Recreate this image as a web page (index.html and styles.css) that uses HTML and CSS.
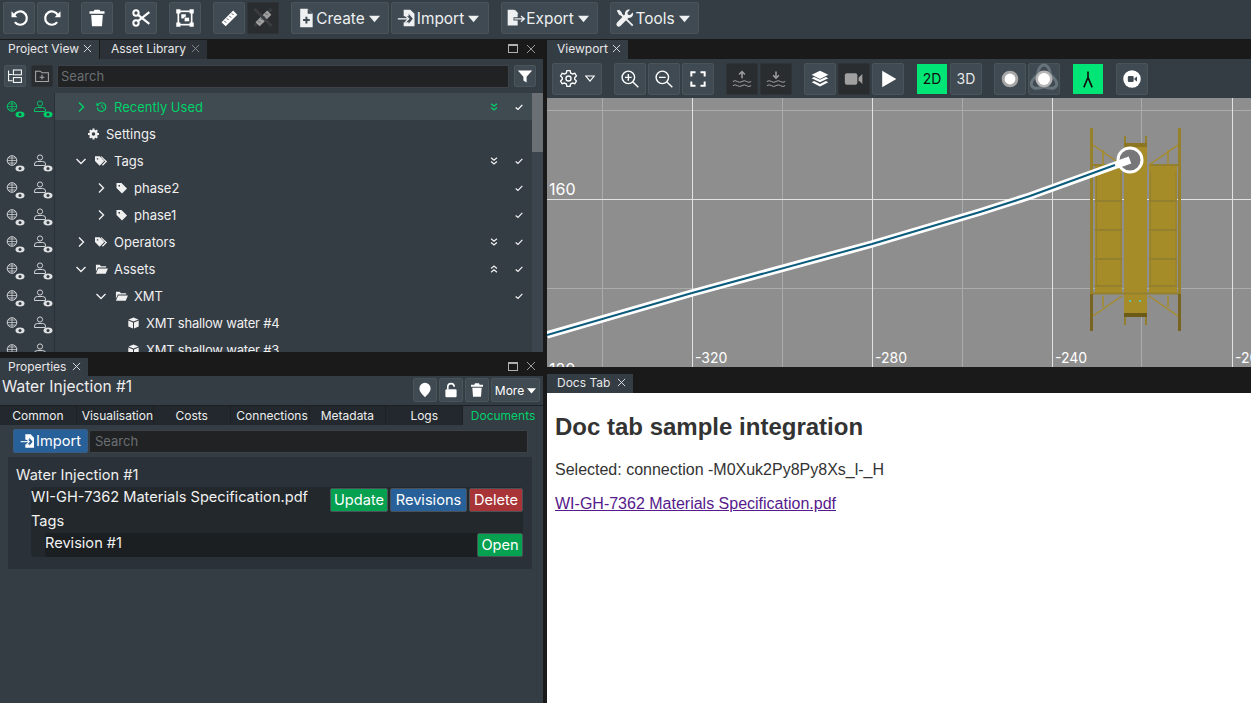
FILE: index.html
```html
<!DOCTYPE html>
<html lang="en">
<head>
    <meta charset="UTF-8">
    <title>Project Viewer</title>
    <link rel="stylesheet" href="styles.css">
</head>
<body>
    <svg class="defs" width="0" height="0">
        <symbol id="i-x" viewBox="0 0 10 10"><path d="M1 1l8 8M9 1l-8 8" fill="none" stroke="currentColor" stroke-width="1"/></symbol>
        <symbol id="i-undo" viewBox="0 0 24 24"><path d="M6 9a8 8 0 1 1 1 8" fill="none" stroke="currentColor" stroke-width="2.6"/><path d="M3 4v7h7z" fill="currentColor"/></symbol>
        <symbol id="i-redo" viewBox="0 0 24 24"><path d="M18 9a8 8 0 1 0-1 8" fill="none" stroke="currentColor" stroke-width="2.6"/><path d="M21 4v7h-7z" fill="currentColor"/></symbol>
        <symbol id="i-trash" viewBox="0 0 24 24"><path d="M9 2h6l1 2h5v3H3V4h5zM5 8.500h14L18 22H6z" fill="currentColor"/></symbol>
        <symbol id="i-scissors" viewBox="0 0 24 24"><circle cx="6" cy="6" r="3.200" fill="none" stroke="currentColor" stroke-width="2.400"/><circle cx="6" cy="18" r="3.200" fill="none" stroke="currentColor" stroke-width="2.400"/><path d="M8 8l14 11M8 16L22 5" stroke="currentColor" stroke-width="2.600"/></symbol>
        <symbol id="i-frame" viewBox="0 0 24 24"><rect x="4" y="4" width="16" height="16" fill="none" stroke="currentColor" stroke-width="2"/><path d="M1.500 1.500h5v5h-5zM17.500 1.500h5v5h-5zM1.500 17.500h5v5h-5zM17.500 17.500h5v5h-5z" fill="currentColor"/><rect x="7.500" y="7.500" width="5.500" height="5" fill="currentColor"/><rect x="11" y="11" width="6.500" height="5.500" rx="1.500" fill="currentColor" stroke="#3f4a52"/></symbol>
        <symbol id="i-ruler" viewBox="0 0 24 24"><path d="M17 3l5 5L8 22l-5-5z" fill="currentColor"/><path d="M15.500 6.500l2 2M12.500 9.500l2 2M9.500 12.500l2 2M6.500 15.500l2 2" stroke="#3f4a52" stroke-width="1.200"/></symbol>
        <symbol id="i-file-plus" viewBox="0 0 24 24"><path d="M5 1h9l6 6v16H5z" fill="currentColor"/><path d="M14 1v6h6" fill="#3f4a52"/><path d="M12.500 10.500v8M8.500 14.500h8" stroke="#3f4a52" stroke-width="2.400"/></symbol>
        <symbol id="i-import" viewBox="0 0 24 24"><path d="M8 2h8l5 5v15H8v-5h6v2l5-6-5-6v3H8z" fill="currentColor"/><path d="M1 13h12" stroke="currentColor" stroke-width="1.600"/><path d="M10 9l4 4-4 4" fill="none" stroke="currentColor" stroke-width="1.600"/></symbol>
        <symbol id="i-export" viewBox="0 0 24 24"><path d="M2 2h8l4 5v4H9v4h5v6H2z" fill="currentColor"/><path d="M11 7V2l4 5z" fill="currentColor"/><path d="M10 13h12M18 9.500l4 3.500-4 3.500" fill="none" stroke="currentColor" stroke-width="1.600"/></symbol>
        <symbol id="i-tools" viewBox="0 0 24 24"><path d="M2 3l3-1 3 3 .5 2L19 17.500l3 3-1.500 1.500-3-3L7 9l-2-.5z" fill="currentColor"/><path d="M21.500 5.500l-3.500 3-2.500-.5-.5-2.500 3-3.500c-3-.8-6.500 1.500-6 5.500L2.500 17.500a2.800 2.800 0 0 0 4 4L16 12c4 .5 6.500-3 5.500-6.500z" fill="currentColor"/></symbol>
        <symbol id="i-caret" viewBox="0 0 12 12"><path d="M0 3h12L6 10z" fill="currentColor"/></symbol>
        <symbol id="i-globe-eye" viewBox="0 0 20 20"><circle cx="7" cy="6.500" r="4.800" fill="none" stroke="currentColor" stroke-width=".9"/><path d="M2.200 6.500h9.600M3 4h8M3 9h8M7 1.700v9.600" stroke="currentColor" stroke-width=".7"/><ellipse cx="15" cy="14.500" rx="4.500" ry="3" fill="currentColor"/><circle cx="15" cy="14.500" r="1.500" fill="#343c44"/></symbol>
        <symbol id="i-user-eye" viewBox="0 0 20 20"><circle cx="7" cy="3.500" r="2.600" fill="none" stroke="currentColor" stroke-width=".9"/><path d="M1.500 11.500V10q0-2.500 3-2.500h5q3 0 3 2.500v1.500z" fill="none" stroke="currentColor" stroke-width=".9"/><ellipse cx="15" cy="14.500" rx="4.500" ry="3" fill="currentColor"/><circle cx="15" cy="14.500" r="1.500" fill="#343c44"/></symbol>
        <symbol id="i-right" viewBox="0 0 12 12"><path d="M4 1.500L8.500 6 4 10.500" fill="none" stroke="currentColor" stroke-width="1.400"/></symbol>
        <symbol id="i-down" viewBox="0 0 12 12"><path d="M1.500 4L6 8.500 10.500 4" fill="none" stroke="currentColor" stroke-width="1.400"/></symbol>
        <symbol id="i-history" viewBox="0 0 12 12"><path d="M2.500 3.500a4.300 4.300 0 1 1-.8 3" fill="none" stroke="currentColor" stroke-width="1.200"/><path d="M.8 1.500v3.300h3.300z" fill="currentColor"/><path d="M6.500 3.500v3l2 1" fill="none" stroke="currentColor"/></symbol>
        <symbol id="i-cog" viewBox="0 0 24 24"><circle cx="12" cy="12" r="6" fill="none" stroke="currentColor" stroke-width="5"/><path d="M12 1v5M12 18v5M1 12h5M18 12h5M4.500 4.500l3 3M16.500 16.500l3 3M4.500 19.500l3-3M16.500 7.500l3-3" stroke="currentColor" stroke-width="4"/></symbol>
        <symbol id="i-cog-line" viewBox="0 0 24 24"><path d="M10 2h4l.7 3 2.300 1.300 3-.9 2 3.400-2.200 2.200v2l2.200 2.200-2 3.400-3-.9L14.700 19 14 22h-4l-.7-3L7 17.700l-3 .9-2-3.400L4.200 13v-2L2 8.800l2-3.400 3 .9L9.300 5z" fill="none" stroke="currentColor" stroke-width="1.700"/><circle cx="12" cy="12" r="3.200" fill="none" stroke="currentColor" stroke-width="1.700"/></symbol>
        <symbol id="i-tag" viewBox="0 0 12 12"><path d="M1 1h5l5.500 5.500-5 5L1 6zM3 3v1.500h1.500V3z" fill="currentColor" fill-rule="evenodd"/></symbol>
        <symbol id="i-tags" viewBox="0 0 14 12"><path d="M0 1h5l5 5-5 5-5-5zM2 3v1.500h1.500V3z" fill="currentColor" fill-rule="evenodd"/><path d="M7 1l6 5.500L8.500 11l-1-1L11 6.500 6 1.500z" fill="currentColor"/></symbol>
        <symbol id="i-folder" viewBox="0 0 14 12"><path d="M1 1.500h4l1.500 1.500H12v1.500H3L1 9z" fill="currentColor"/><path d="M3.500 5.500H14l-2.500 5.500H1z" fill="currentColor"/></symbol>
        <symbol id="i-cube" viewBox="0 0 12 12"><path d="M6 .5l5 2-5 2-5-2zM.8 3.500L5.500 5.500V11.500L.8 9.500zM11.200 3.500V9.500L6.500 11.500V5.500z" fill="currentColor"/></symbol>
        <symbol id="i-check" viewBox="0 0 12 12"><path d="M2 6.500L4.800 9 10 3.500" fill="none" stroke="currentColor" stroke-width="1.500"/></symbol>
        <symbol id="i-dbl-down" viewBox="0 0 12 12"><path d="M2.500 2l3.500 3 3.500-3M2.500 6.500l3.500 3 3.500-3" fill="none" stroke="currentColor" stroke-width="1.500"/></symbol>
        <symbol id="i-dbl-up" viewBox="0 0 12 12"><path d="M2.500 5.500l3.500-3 3.500 3M2.500 10l3.500-3 3.500 3" fill="none" stroke="currentColor" stroke-width="1.500"/></symbol>
        <symbol id="i-tree" viewBox="0 0 20 20"><path d="M2 3v13h5M2 8h5" fill="none" stroke="currentColor" stroke-width="1.300"/><rect x="8" y="2.500" width="10" height="6" fill="none" stroke="currentColor" stroke-width="1.300"/><rect x="8" y="12" width="10" height="6" fill="none" stroke="currentColor" stroke-width="1.300"/></symbol>
        <symbol id="i-folder-plus" viewBox="0 0 20 20"><path d="M2 4h6l2 2h8v11H2z" fill="none" stroke="currentColor" stroke-width="1.300"/><path d="M10 8.500v6M7 11.500h6" stroke="currentColor" stroke-width="1.300"/></symbol>
        <symbol id="i-filter" viewBox="0 0 20 20"><path d="M1 3h18l-7 8v7l-4-2.500V11z" fill="currentColor"/></symbol>
        <symbol id="i-zoom-in" viewBox="0 0 24 24"><circle cx="10" cy="10" r="7.500" fill="none" stroke="currentColor" stroke-width="1.700"/><path d="M15.500 15.500L22 22M10 6v8M6 10h8" stroke="currentColor" stroke-width="1.700"/></symbol>
        <symbol id="i-zoom-out" viewBox="0 0 24 24"><circle cx="10" cy="10" r="7.500" fill="none" stroke="currentColor" stroke-width="1.700"/><path d="M15.500 15.500L22 22M6 10h8" stroke="currentColor" stroke-width="1.700"/></symbol>
        <symbol id="i-fit" viewBox="0 0 24 24"><path d="M4 9V4h5M15 4h5v5M20 15v5h-5M9 20H4v-5" fill="none" stroke="currentColor" stroke-width="2.400"/></symbol>
        <symbol id="i-water-up" viewBox="0 0 24 24"><path d="M12 3v8M8.500 6.500L12 3l3.500 3.500" fill="none" stroke="currentColor" stroke-width="1.800"/><path d="M1 15q2.750-2 5.500 0t5.500 0 5.500 0 5.500 0M1 20q2.750-2 5.500 0t5.500 0 5.500 0 5.500 0" fill="none" stroke="currentColor" stroke-width="1.200"/></symbol>
        <symbol id="i-water-down" viewBox="0 0 24 24"><path d="M12 3v8M8.500 7.500L12 11l3.500-3.500" fill="none" stroke="currentColor" stroke-width="1.800"/><path d="M1 15q2.750-2 5.500 0t5.500 0 5.500 0 5.500 0M1 20q2.750-2 5.500 0t5.500 0 5.500 0 5.500 0" fill="none" stroke="currentColor" stroke-width="1.200"/></symbol>
        <symbol id="i-layers" viewBox="0 0 24 24"><path d="M12 2l10 5-10 5L2 7z" fill="currentColor"/><path d="M2 11l3-1.500 7 3.500 7-3.500 3 1.500-10 5z" fill="currentColor"/><path d="M2 16l3-1.500 7 3.500 7-3.500 3 1.500-10 5z" fill="currentColor"/></symbol>
        <symbol id="i-video" viewBox="0 0 24 24"><rect x="1" y="5" width="15" height="14" rx="2.500" fill="currentColor"/><path d="M17.500 10.500L22 6v12l-4.500-4.500z" fill="currentColor"/></symbol>
        <symbol id="i-play" viewBox="0 0 24 24"><path d="M5 2l17 10-17 10z" fill="currentColor"/></symbol>
        <symbol id="i-dot" viewBox="0 0 24 24"><circle cx="12" cy="12" r="10" fill="#a6a6a6"/><circle cx="12" cy="12" r="6.500" fill="#fff"/></symbol>
        <symbol id="i-dot-orbit" viewBox="0 0 32 32"><g fill="none" stroke="#68747b" stroke-width="3"><ellipse cx="16" cy="13" rx="6.500" ry="11"/><ellipse cx="16" cy="13" rx="6.500" ry="11" transform="rotate(120 16 16)"/><ellipse cx="16" cy="13" rx="6.500" ry="11" transform="rotate(240 16 16)"/></g><circle cx="16" cy="16" r="8.500" fill="#b5b5b5"/><circle cx="16" cy="16" r="6" fill="#fff"/></symbol>
        <symbol id="i-branch" viewBox="0 0 24 24"><path d="M12 3v7L7 22M12 10l5 12" fill="none" stroke="currentColor" stroke-width="2"/></symbol>
        <symbol id="i-rec" viewBox="0 0 24 24"><circle cx="12" cy="12" r="10.500" fill="currentColor"/><rect x="7" y="8.500" width="7" height="7" rx="1.500" fill="#3f4a52"/><path d="M15 11l3-2v6l-3-2z" fill="#3f4a52"/></symbol>
        <symbol id="i-pin" viewBox="0 0 20 20"><path d="M10 1a7 7 0 0 1 7 7c0 4-4 8-7 11-3-3-7-7-7-11a7 7 0 0 1 7-7z" fill="currentColor"/></symbol>
        <symbol id="i-unlock" viewBox="0 0 20 20"><path d="M6 9V6a4 4 0 0 1 8 0" fill="none" stroke="currentColor" stroke-width="2"/><rect x="3" y="9" width="14" height="10" rx="1.500" fill="currentColor"/></symbol>
    </svg>

    <header class="topbar">
        <button class="tool"><svg class="ico-lg"><use href="#i-undo"/></svg></button>
        <button class="tool"><svg class="ico-lg"><use href="#i-redo"/></svg></button>
        <button class="tool gap-l"><svg class="ico-lg"><use href="#i-trash"/></svg></button>
        <button class="tool gap-l"><svg class="ico-lg"><use href="#i-scissors"/></svg></button>
        <button class="tool gap-l"><svg class="ico-lg"><use href="#i-frame"/></svg></button>
        <button class="tool gap-l"><svg class="ico-lg"><use href="#i-ruler"/></svg></button>
        <button class="tool off"><i class="strike under"></i><svg class="ico-lg"><use href="#i-ruler"/></svg><i class="strike"></i></button>
        <button class="menu menu-create gap-l"><svg class="ico-lg"><use href="#i-file-plus"/></svg>Create<svg class="caret"><use href="#i-caret"/></svg></button>
        <button class="menu menu-create"><svg class="ico-lg"><use href="#i-import"/></svg>Import<svg class="caret"><use href="#i-caret"/></svg></button>
        <button class="menu menu-export gap-l"><svg class="ico-lg"><use href="#i-export"/></svg>Export<svg class="caret"><use href="#i-caret"/></svg></button>
        <button class="menu menu-tools gap-l"><svg class="ico-lg"><use href="#i-tools"/></svg>Tools<svg class="caret"><use href="#i-caret"/></svg></button>
    </header>

    <div class="workspace">
        <div class="left-col">
            <section class="project-panel">
                <div class="tabstrip">
                    <div class="tab active tab-project">Project View<svg class="tab-x"><use href="#i-x"/></svg></div>
                    <div class="tab tab-assets">Asset Library<svg class="tab-x dim"><use href="#i-x"/></svg></div>
                    <div class="win-ctrl"><span class="win-max"></span><svg class="win-close"><use href="#i-x"/></svg></div>
                </div>
                <div class="search-bar">
                    <button class="mini"><svg class="ico-md"><use href="#i-tree"/></svg></button>
                    <button class="mini off"><svg class="ico-md"><use href="#i-folder-plus"/></svg></button>
                    <input class="search" placeholder="Search">
                    <button class="mini"><svg class="ico-md"><use href="#i-filter"/></svg></button>
                </div>
                <div class="tree-wrap">
                    <div class="tree">
                        <div class="row selected">
                            <div class="gutter"><svg class="ico-eye"><use href="#i-globe-eye"/></svg><svg class="ico-eye"><use href="#i-user-eye"/></svg></div>
                            <div class="node lvl0"><svg class="chev"><use href="#i-right"/></svg><svg class="ico-sm"><use href="#i-history"/></svg><span>Recently Used</span></div>
                            <svg class="flag"><use href="#i-dbl-down"/></svg><svg class="tick"><use href="#i-check"/></svg>
                        </div>
                        <div class="row">
                            <div class="gutter"></div>
                            <div class="node lvl-set"><svg class="ico-sm"><use href="#i-cog"/></svg><span>Settings</span></div>
                        </div>
                        <div class="row">
                            <div class="gutter"><svg class="ico-eye"><use href="#i-globe-eye"/></svg><svg class="ico-eye"><use href="#i-user-eye"/></svg></div>
                            <div class="node lvl0"><svg class="chev"><use href="#i-down"/></svg><svg class="ico-sm"><use href="#i-tags"/></svg><span>Tags</span></div>
                            <svg class="flag"><use href="#i-dbl-down"/></svg><svg class="tick"><use href="#i-check"/></svg>
                        </div>
                        <div class="row">
                            <div class="gutter"><svg class="ico-eye"><use href="#i-globe-eye"/></svg><svg class="ico-eye"><use href="#i-user-eye"/></svg></div>
                            <div class="node lvl1"><svg class="chev"><use href="#i-right"/></svg><svg class="ico-sm"><use href="#i-tag"/></svg><span>phase2</span></div>
                            <svg class="tick"><use href="#i-check"/></svg>
                        </div>
                        <div class="row">
                            <div class="gutter"><svg class="ico-eye"><use href="#i-globe-eye"/></svg><svg class="ico-eye"><use href="#i-user-eye"/></svg></div>
                            <div class="node lvl1"><svg class="chev"><use href="#i-right"/></svg><svg class="ico-sm"><use href="#i-tag"/></svg><span>phase1</span></div>
                            <svg class="tick"><use href="#i-check"/></svg>
                        </div>
                        <div class="row">
                            <div class="gutter"><svg class="ico-eye"><use href="#i-globe-eye"/></svg><svg class="ico-eye"><use href="#i-user-eye"/></svg></div>
                            <div class="node lvl0"><svg class="chev"><use href="#i-right"/></svg><svg class="ico-sm"><use href="#i-tags"/></svg><span>Operators</span></div>
                            <svg class="flag"><use href="#i-dbl-down"/></svg><svg class="tick"><use href="#i-check"/></svg>
                        </div>
                        <div class="row">
                            <div class="gutter"><svg class="ico-eye"><use href="#i-globe-eye"/></svg><svg class="ico-eye"><use href="#i-user-eye"/></svg></div>
                            <div class="node lvl0"><svg class="chev"><use href="#i-down"/></svg><svg class="ico-sm"><use href="#i-folder"/></svg><span>Assets</span></div>
                            <svg class="flag"><use href="#i-dbl-up"/></svg><svg class="tick"><use href="#i-check"/></svg>
                        </div>
                        <div class="row">
                            <div class="gutter"><svg class="ico-eye"><use href="#i-globe-eye"/></svg><svg class="ico-eye"><use href="#i-user-eye"/></svg></div>
                            <div class="node lvl1"><svg class="chev"><use href="#i-down"/></svg><svg class="ico-sm"><use href="#i-folder"/></svg><span>XMT</span></div>
                            <svg class="tick"><use href="#i-check"/></svg>
                        </div>
                        <div class="row">
                            <div class="gutter"><svg class="ico-eye"><use href="#i-globe-eye"/></svg><svg class="ico-eye"><use href="#i-user-eye"/></svg></div>
                            <div class="node lvl2"><svg class="ico-sm"><use href="#i-cube"/></svg><span>XMT shallow water #4</span></div>
                        </div>
                        <div class="row">
                            <div class="gutter"><svg class="ico-eye"><use href="#i-globe-eye"/></svg><svg class="ico-eye"><use href="#i-user-eye"/></svg></div>
                            <div class="node lvl2"><svg class="ico-sm"><use href="#i-cube"/></svg><span>XMT shallow water #3</span></div>
                        </div>
                    </div>
                    <div class="scrollbar"><div class="scroll-thumb"></div></div>
                </div>
            </section>

            <section class="props-panel">
                <div class="tabstrip">
                    <div class="tab active tab-props">Properties<svg class="tab-x"><use href="#i-x"/></svg></div>
                    <div class="win-ctrl"><span class="win-max"></span><svg class="win-close"><use href="#i-x"/></svg></div>
                </div>
                <div class="props-head">
                    <div class="props-title">Water Injection #1</div>
                    <button class="small"><svg class="ico-md"><use href="#i-pin"/></svg></button>
                    <button class="small"><svg class="ico-md"><use href="#i-unlock"/></svg></button>
                    <button class="small"><svg class="ico-md"><use href="#i-trash"/></svg></button>
                    <button class="small more">More<svg class="caret-sm"><use href="#i-caret"/></svg></button>
                </div>
                <div class="props-tabs">
                    <div class="ptab">Common</div>
                    <div class="ptab nudge">Visualisation</div>
                    <div class="ptab">Costs</div>
                    <div class="ptab wide nudge">Connections</div>
                    <div class="ptab">Metadata</div>
                    <div class="ptab">Logs</div>
                    <div class="ptab on">Documents</div>
                </div>
                <div class="docs-search">
                    <button class="btn-import"><svg class="ico-md"><use href="#i-import"/></svg>Import</button>
                    <input class="search" placeholder="Search">
                </div>
                <div class="docs-box">
                    <div class="docs-name">Water Injection #1</div>
                    <div class="doc-card">
                        <div class="doc-row">
                            <span class="doc-file">WI-GH-7362 Materials Specification.pdf</span>
                            <button class="act green">Update</button>
                            <button class="act blue">Revisions</button>
                            <button class="act red">Delete</button>
                        </div>
                        <div class="doc-tags">Tags</div>
                        <div class="rev-row">
                            <span class="rev-name">Revision #1</span>
                            <button class="act green">Open</button>
                        </div>
                    </div>
                </div>
            </section>
        </div>

        <div class="right-col">
            <section class="viewport-panel">
                <div class="tabstrip">
                    <div class="tab active tab-view">Viewport<svg class="tab-x"><use href="#i-x"/></svg></div>
                </div>
                <div class="view-tools">
                    <button class="tool tool-settings"><svg class="ico-cog"><use href="#i-cog-line"/></svg><svg class="caret-open" viewBox="0 0 12 8"><path d="M1 1h10L6 7z" fill="none" stroke="currentColor" stroke-width="1.400"/></svg></button>
                    <button class="tool gap-l"><svg class="ico-lg"><use href="#i-zoom-in"/></svg></button>
                    <button class="tool"><svg class="ico-lg"><use href="#i-zoom-out"/></svg></button>
                    <button class="tool"><svg class="ico-lg"><use href="#i-fit"/></svg></button>
                    <button class="tool off gap-l"><svg class="ico-lg"><use href="#i-water-up"/></svg></button>
                    <button class="tool off"><svg class="ico-lg"><use href="#i-water-down"/></svg></button>
                    <button class="tool gap-l"><svg class="ico-lg"><use href="#i-layers"/></svg></button>
                    <button class="tool off"><svg class="ico-lg"><use href="#i-video"/></svg></button>
                    <button class="tool"><svg class="ico-lg"><use href="#i-play"/></svg></button>
                    <button class="mode on gap-mode">2D</button>
                    <button class="tool txt">3D</button>
                    <button class="tool gap-l"><svg class="ico-lg"><use href="#i-dot"/></svg></button>
                    <button class="tool"><svg class="ico-orbit"><use href="#i-dot-orbit"/></svg></button>
                    <button class="mode on gap-mode"><svg class="ico-lg"><use href="#i-branch"/></svg></button>
                    <button class="tool gap-mode"><svg class="ico-lg"><use href="#i-rec"/></svg></button>
                </div>
                <svg class="canvas" viewBox="547 98 704 269">
                    <rect x="547" y="98" width="704" height="269" fill="#8e8e8e"/>
                    <g class="grid-minor">
                        <path d="M602.500 98v269M782.500 98v269M962.500 98v269M1141.500 98v269M547 110.500h704M547 288.500h704"/>
                    </g>
                    <g class="grid-major">
                        <path d="M692.500 98v269M872.500 98v269M1052.500 98v269M1232.500 98v269M547 199.500h704"/>
                    </g>
                    <g class="labels">
                        <text class="label-y" x="549" y="195">160</text>
                        <text class="label-y" x="549" y="375">120</text>
                        <text x="695" y="363">-320</text>
                        <text x="875" y="363">-280</text>
                        <text x="1055" y="363">-240</text>
                        <text x="1235" y="363">-200</text>
                    </g>
                    <g class="rig">
                        <rect x="1095" y="166" width="27" height="128" fill="#a68c28"/>
                        <rect x="1149" y="166" width="28" height="128" fill="#a68c28"/>
                        <rect x="1124" y="143" width="23" height="173" fill="#a68c28"/>
                        <path class="rig-bar" d="M1125 136v8M1146 136v8M1125 316v9M1146 316v9M1095 201h27M1095 230h27M1095 259h27M1095 286h27M1149 201h28M1149 230h28M1149 259h28M1149 286h28M1090 165h32M1149 165h32M1090 293.500h91"/>
                        <path class="rig-edge" d="M1096.500 172v114M1121 172v114M1150.500 172v114M1176 172v114"/>
                        <rect x="1090" y="128" width="3" height="203" fill="#96802a"/>
                        <rect x="1178" y="128" width="3" height="203" fill="#96802a"/>
                        <rect x="1090" y="294" width="3" height="37" fill="#786620"/>
                        <rect x="1178" y="294" width="3" height="37" fill="#786620"/>
                        <rect x="1124" y="313" width="23" height="4" fill="#6b5a18"/>
                        <rect x="1124" y="143" width="23" height="4" fill="#8c7522"/>
                        <path class="rig-line" d="M1093 145l29 20M1178 145l-29 20M1103 150v15M1168 150v15M1122 296l-29 20M1149 296l29 20M1103 296v11M1168 296v11"/>
                        <circle cx="1130" cy="301" r="1" fill="#40d0d8"/>
                        <circle cx="1140" cy="301" r="1" fill="#40d0d8"/>
                    </g>
                    <circle cx="1130" cy="160" r="12" fill="#77777a" stroke="#fff" stroke-width="3"/>
                    <polyline class="pipe-outer" points="547,335 692,293 872,244 980,212 1030,196 1130,160"/>
                    <polyline class="pipe-inner" points="547,335 692,293 872,244 980,212 1030,196 1115,165"/>
                </svg>
            </section>
            <section class="docs-panel">
                <div class="tabstrip">
                    <div class="tab active tab-docs">Docs Tab<svg class="tab-x"><use href="#i-x"/></svg></div>
                </div>
                <div class="doc-page">
                    <h1>Doc tab sample integration</h1>
                    <p>Selected: connection -M0Xuk2Py8Py8Xs_l-_H</p>
                    <p><a href="#">WI-GH-7362 Materials Specification.pdf</a></p>
                </div>
            </section>
        </div>
    </div>
</body>
</html>
```

FILE: styles.css
```css
/* Base */
* {
    box-sizing: border-box;
}

html, body {
    height: 100%;
}

body {
    margin: 0;
    overflow: hidden;
    background-color: #1a1a1a;
    color: #f2f2f2;
    font-family: Inter, "Noto Sans", sans-serif;
    font-size: 12px;
    display: flex;
    flex-direction: column;
}

button {
    font-family: inherit;
    color: inherit;
    padding: 0;
    cursor: pointer;
}

svg {
    display: block;
    flex: none;
}

.defs {
    position: absolute;
}

/* Icon sizes */
.ico-lg { width: 20px; height: 20px; }
.ico-md { width: 16px; height: 16px; }
.ico-sm { width: 13px; height: 12px; }
.ico-cog { width: 19px; height: 19px; }
.ico-orbit { width: 32px; height: 32px; }
.ico-eye { width: 20px; height: 20px; color: #dfe1e2; }
.caret { width: 11px; height: 11px; margin-left: 4px; }
.caret-sm { width: 9px; height: 9px; margin-left: 3px; }
.caret-open { width: 10px; height: 7px; margin-left: 7px; }

/* Top toolbar */
.topbar {
    height: 39px;
    flex: none;
    background-color: #343c44;
    display: flex;
    align-items: flex-start;
    gap: 2px;
    padding: 2px 0 0 3px;
}

.tool {
    position: relative;
    width: 32px;
    height: 32px;
    background-color: #3f4a52;
    border: 1px solid #4a545b;
    border-radius: 2px;
    color: #fff;
    display: flex;
    align-items: center;
    justify-content: center;
    flex: none;
}

.tool.off {
    background-color: #2a2d30;
    border-color: #2f3337;
    color: #a0a0a0;
}

.tool.off svg {
    position: relative;
    z-index: 1;
}

.tool.txt {
    font-size: 14px;
    color: #e6e6e6;
    margin-left: 1px;
}

/* The two bars of the cross over the disabled ruler */
.strike {
    position: absolute;
    z-index: 2;
    left: 3px;
    top: 13px;
    width: 24px;
    height: 3px;
    background-color: #3a3d40;
    transform: rotate(45deg);
}

.strike.under {
    z-index: 0;
    transform: rotate(-45deg);
}

.gap-l {
    margin-left: 10px;
}

.gap-mode {
    margin-left: 11px;
}

.menu {
    height: 32px;
    background-color: #3f4a52;
    border: 1px solid #4a545b;
    border-radius: 2px;
    font-size: 15.400px;
    display: flex;
    align-items: center;
    justify-content: center;
    flex: none;
    padding-right: 4px;
    color: #eef0f1;
}

.menu-create { width: 98px; }
.menu-export { width: 97px; }
.menu-tools { width: 89px; }

/* Workspace split */
.workspace {
    flex: 1;
    display: flex;
    min-height: 0;
    gap: 4px;
}

.left-col {
    width: 543px;
    display: flex;
    flex-direction: column;
    gap: 5px;
}

.right-col {
    flex: 1;
    display: flex;
    flex-direction: column;
    min-width: 0;
}

/* Tabs */
.tabstrip {
    height: 20px;
    flex: none;
    background-color: #1a1a1a;
    display: flex;
    padding-top: 1px;
    gap: 1px;
}

.tab {
    height: 19px;
    display: flex;
    align-items: center;
    justify-content: space-between;
    padding: 0 7px 2px 8px;
    background-color: #2b3137;
    color: #e8e8e8;
}

.tab.active {
    background-color: #343c44;
}

.tab-project { width: 99px; }
.tab-assets { width: 107px; padding-left: 11px; }
.tab-props { width: 88px; }
.tab-view { width: 81px; padding-left: 10px; }
.tab-docs { width: 86px; padding-left: 10px; }

.tab-x {
    width: 9px;
    height: 9px;
    color: #e8e8e8;
}

.tab-x.dim {
    color: #8a8f93;
}

.win-ctrl {
    margin-left: auto;
    display: flex;
    align-items: center;
    gap: 8px;
    padding: 0 7px 2px 0;
    color: #9c9c9c;
}

.win-max {
    width: 10px;
    height: 9px;
    border: 1px solid #b0b0b0;
    border-top-width: 2px;
}

.win-close {
    width: 10px;
    height: 10px;
}

/* Project panel */
.project-panel {
    height: 313px;
    flex: none;
    display: flex;
    flex-direction: column;
    background-color: #343c44;
}

.search-bar {
    height: 34px;
    flex: none;
    display: flex;
    align-items: center;
    gap: 5px;
    padding: 0 7px 0 4px;
}

.mini {
    width: 22px;
    height: 22px;
    flex: none;
    background-color: #3f4a52;
    border: 1px solid #4a545b;
    border-radius: 2px;
    display: flex;
    align-items: center;
    justify-content: center;
    color: #fff;
}

.mini.off {
    background-color: #2a2d30;
    border-color: #2f3337;
    color: #a8a8a8;
}

.search {
    flex: 1;
    min-width: 0;
    height: 23px;
    background-color: #202224;
    border: 1px solid #3c4247;
    border-radius: 2px;
    padding: 0 3px;
    font-family: inherit;
    font-size: 13px;
    color: #ddd;
    outline: none;
}

.search-bar .search {
    margin-left: -1px;
}

.docs-search .search {
    padding: 0 5px;
}

.search::placeholder {
    color: #6b6f72;
}

.tree-wrap {
    flex: 1;
    display: flex;
    min-height: 0;
}

.tree {
    flex: 1;
    overflow: hidden;
    min-width: 0;
}

.scrollbar {
    width: 11px;
    flex: none;
    background-color: #3c454d;
}

.scroll-thumb {
    height: 59px;
    background-color: #6b7075;
}

.row {
    height: 27px;
    display: flex;
    align-items: center;
    font-size: 13px;
    color: #f0f0f0;
}

.row.selected {
    color: #00d26a;
    background: linear-gradient(to right, #343c44 55px, #3f4a51 55px);
}

.row.selected .ico-eye {
    color: #00d26a;
}

.row.selected .tick {
    color: #fff;
}

.gutter {
    width: 55px;
    height: 100%;
    flex: none;
    display: flex;
    align-items: flex-start;
    gap: 8px;
    padding: 7px 0 0 5px;
    border-right: 1px solid #2a3037;
}

.node {
    flex: 1;
    height: 100%;
    display: flex;
    align-items: center;
    gap: 6px;
    min-width: 0;
    white-space: nowrap;
}

.lvl0 { padding-left: 20px; }
.lvl1 { padding-left: 40px; }
.lvl2 { padding-left: 72px; letter-spacing: -0.2px; }
.lvl-set { padding-left: 32px; }

.chev {
    width: 12px;
    height: 12px;
    margin-right: 2px;
}

.flag {
    width: 10px;
    height: 10px;
    margin-right: 15px;
}

.tick {
    width: 10px;
    height: 10px;
    margin-right: 8px;
}

/* Properties panel */
.props-panel {
    flex: 1;
    min-height: 0;
    background-color: #343c44;
    display: flex;
    flex-direction: column;
}

.props-panel .tabstrip {
    height: 19px;
}

.props-panel .tab {
    height: 18px;
}

.props-head {
    height: 29px;
    flex: none;
    display: flex;
    align-items: flex-start;
    gap: 2px;
    padding: 2px 3px 0 2px;
}

.props-title {
    flex: 1;
    font-size: 15.500px;
    line-height: 18px;
    color: #eee;
}

.small {
    width: 24px;
    height: 24px;
    background-color: #3f4a52;
    border: 1px solid #4a545b;
    border-radius: 2px;
    display: flex;
    align-items: center;
    justify-content: center;
    color: #fff;
}

.more {
    width: 49px;
    font-size: 12px;
}

.props-tabs {
    height: 20px;
    flex: none;
    display: flex;
    gap: 1px;
    background-color: #1d2024;
    padding-top: 1px;
}

.ptab {
    width: 76px;
    background-color: #22282d;
    display: flex;
    align-items: center;
    justify-content: center;
    white-space: nowrap;
    color: #eee;
}

.ptab.nudge {
    padding-left: 5px;
}

.ptab.wide {
    width: 78px;
}

.ptab.on {
    width: 80px;
    background-color: #343c44;
    color: #00d26a;
}

.docs-search {
    height: 32px;
    flex: none;
    display: flex;
    align-items: center;
    gap: 1px;
    padding: 0 15px 0 13px;
}

.btn-import {
    width: 75px;
    height: 24px;
    flex: none;
    background-color: #28609a;
    border: 1px solid #3a5c80;
    border-radius: 2px;
    font-size: 14.600px;
    display: flex;
    align-items: center;
    justify-content: center;
    color: #fff;
}

.docs-box {
    margin: 0 11px 0 8px;
    background-color: #2a3138;
    height: 112px;
    padding: 8px 8px 0;
}

.docs-name {
    font-size: 14.600px;
    line-height: 20px;
    color: #eee;
}

.doc-card {
    margin: 2px 1px 0 15px;
    background-color: #23282c;
    border-radius: 4px;
    height: 70px;
    display: flex;
    flex-direction: column;
}

.doc-row {
    height: 24px;
    flex: none;
    display: flex;
    align-items: flex-start;
    gap: 2px;
    font-size: 14.600px;
}

.doc-file {
    flex: 1;
    line-height: 20px;
    white-space: nowrap;
}

.act {
    height: 24px;
    padding: 0 0 1px;
    margin-top: 1px;
    border: 1px solid #4a5258;
    border-radius: 2px;
    font-size: 14.600px;
    color: #fff;
    flex: none;
}

.act.green { background-color: #05a050; }
.act.blue { background-color: #28609a; }
.act.red { background-color: #a83438; }
.doc-row .green { width: 58px; }
.doc-row .blue { width: 77px; }
.doc-row .red { width: 54px; }
.rev-row .green { width: 46px; margin-top: 0; }

.doc-tags {
    height: 22px;
    font-size: 14.600px;
    line-height: 20px;
}

.rev-row {
    height: 24px;
    margin-left: 14px;
    background-color: #1c1f22;
    border-radius: 3px;
    display: flex;
    align-items: flex-start;
    font-size: 14.600px;
}

.rev-name {
    flex: 1;
    line-height: 20px;
}

/* Viewport */
.viewport-panel {
    height: 328px;
    flex: none;
    display: flex;
    flex-direction: column;
    background-color: #343c44;
}

.view-tools {
    height: 39px;
    flex: none;
    display: flex;
    align-items: center;
    gap: 2px;
    padding-left: 5px;
}

.tool-settings {
    width: 50px;
}

.mode {
    width: 30px;
    height: 30px;
    background-color: #00e676;
    border: none;
    color: #111;
    font-size: 14px;
    display: flex;
    align-items: center;
    justify-content: center;
    flex: none;
}

.canvas {
    width: 704px;
    height: 269px;
    flex: none;
}

.grid-minor path {
    stroke: #ababab;
    stroke-width: 1;
    fill: none;
}

.grid-major path {
    stroke: #e2e2e2;
    stroke-width: 1;
    fill: none;
}

.labels text {
    font-family: Inter, sans-serif;
    font-size: 14px;
    fill: #fff;
}

.labels .label-y {
    font-size: 16px;
}

.rig-bar {
    stroke: #93802f;
    stroke-width: 2;
    fill: none;
}

.rig-edge {
    stroke: #93802f;
    stroke-width: 1;
    fill: none;
}

.rig-line {
    stroke: #a68c28;
    stroke-width: 1.500;
    fill: none;
}

.pipe-outer {
    fill: none;
    stroke: #fff;
    stroke-width: 7.500;
}

.pipe-inner {
    fill: none;
    stroke: #0b5b7c;
    stroke-width: 2;
}

/* Docs tab */
.docs-panel {
    flex: 1;
    min-height: 0;
    display: flex;
    flex-direction: column;
    margin-top: 6px;
}

.doc-page {
    flex: 1;
    background-color: #fff;
    color: #333;
    font-family: "Liberation Sans", Arial, sans-serif;
    font-size: 16px;
    padding: 20px 8px;
}

.doc-page h1 {
    font-size: 24px;
    line-height: 28px;
    margin: 0 0 20px;
}

.doc-page p {
    margin: 0 0 16px;
    line-height: 18px;
}

.doc-page a {
    color: #551a8b;
}
```
